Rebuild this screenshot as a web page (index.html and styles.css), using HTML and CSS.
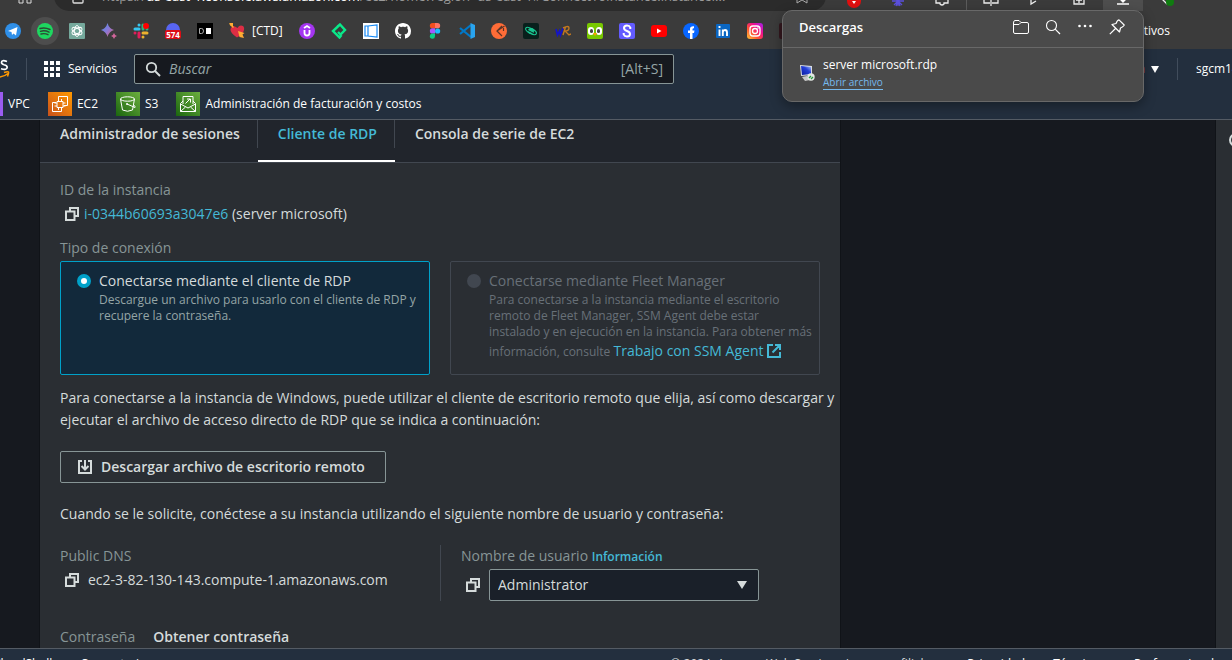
FILE: index.html
```html
<!DOCTYPE html>
<html lang="es">
<head>
<meta charset="utf-8">
<title>Conectarse a la instancia | EC2</title>
<link rel="stylesheet" href="styles.css">
</head>
<body>
<svg class="defs" aria-hidden="true">
  <defs>
    <linearGradient id="gStar" x1="0" y1="0" x2="1" y2="1"><stop offset="0" stop-color="#4a90e2"/><stop offset=".5" stop-color="#8a78d8"/><stop offset="1" stop-color="#e0606a"/></linearGradient>
    <linearGradient id="gEc2" x1="0" y1="1" x2="1" y2="0"><stop offset="0" stop-color="#c8511b"/><stop offset="1" stop-color="#ff9900"/></linearGradient>
    <linearGradient id="gGreen" x1="0" y1="1" x2="1" y2="0"><stop offset="0" stop-color="#1b660f"/><stop offset="1" stop-color="#6cae3e"/></linearGradient>
    <linearGradient id="gIg" x1="0" y1="1" x2="1" y2="0"><stop offset="0" stop-color="#ffc837"/><stop offset=".35" stop-color="#ff5430"/><stop offset=".65" stop-color="#f0108c"/><stop offset="1" stop-color="#a020f0"/></linearGradient>
    <linearGradient id="gScreen" x1="0" y1="1" x2="1" y2="0"><stop offset="0" stop-color="#0a1a9c"/><stop offset=".6" stop-color="#2540d8"/><stop offset="1" stop-color="#a8c4f8"/></linearGradient>
    <symbol id="copy" viewBox="0 0 14 14"><path d="M1 4.500h8.500V13H1zM5 4.500V1h8v8H9.500" fill="none" stroke="currentColor" stroke-width="2"/></symbol>
  </defs>
</svg>

<header class="browser">
  <div class="toolbar">
    <svg class="ico tool-apps" viewBox="0 0 16 16"><path d="M2 2h4v12H2zM10 2h4v12h-4z" fill="none" stroke="#ddd"/></svg>
    <div class="address">
      <svg class="ico" viewBox="0 0 16 16"><rect x="3" y="5" width="10" height="10" rx="1" fill="none" stroke="#ddd" stroke-width="1.3"/></svg>
      <span class="url">https://<b>us-east-1.console.aws.amazon.com</b>/ec2/home?region=us-east-1#ConnectToInstance:instanceI...</span>
      <svg class="ico star" viewBox="0 0 16 16"><path d="M3 4v11l5-3 5 3V4" fill="none" stroke="#aaa"/></svg>
    </div>
    <div class="tools">
      <svg class="ico" viewBox="0 0 16 16"><circle cx="8" cy="6" r="7" fill="#e01010"/><path d="M6 6l2 3 2-3z" fill="#fff"/></svg>
      <svg class="ico" viewBox="0 0 16 16"><path d="M8 0v11M2 6h12M4 2l8 8M12 2l-8 8M6 0l4 11M10 0L6 11" stroke="#5b50dd" stroke-width="1.3"/></svg>
      <svg class="ico" viewBox="0 0 16 16"><path d="M2 1v7h4v1q2 2 4 0V8h4V1" fill="none" stroke="#eee" stroke-width="1.3"/></svg>
      <span class="tool-line"></span>
      <svg class="ico" viewBox="0 0 16 16"><path d="M7 8H1V0M9 8h6V0M8 0v11" fill="none" stroke="#eee" stroke-width="1.3"/></svg>
      <svg class="ico" viewBox="0 0 16 16"><path d="M4 2v7l5-3" fill="none" stroke="#eee" stroke-width="1.3"/></svg>
      <svg class="ico" viewBox="0 0 16 16"><path d="M3 3v6h10V3M8 3v5M5 5h6" fill="none" stroke="#eee" stroke-width="1.3"/></svg>
      <span class="tool-active"><svg class="ico" viewBox="0 0 16 16"><path d="M2 9h12M8 0v7M5 4l3 3 3-3" fill="none" stroke="#fff" stroke-width="1.3"/></svg></span>
      <svg class="ico" viewBox="0 0 16 16"><path d="M2 3l6 6" stroke="#eee" stroke-width="1.3"/><circle cx="11" cy="7" r="4" fill="#107c10"/></svg>
    </div>
  </div>
  <nav class="bookmarks" aria-label="Favoritos">
    <a href="#" aria-label="Telegram"><svg class="ico" viewBox="0 0 16 16"><circle cx="8" cy="8" r="8" fill="#2f8fe8"/><path d="M3 8l9.500-4L11 12.500 8.500 10.500 7 12l-.500-3z" fill="#fff"/></svg></a>
    <a href="#" class="halo" aria-label="Spotify"><svg class="ico" viewBox="0 0 16 16"><circle cx="8" cy="8" r="8" fill="#1ed760"/><path d="M3 5.500q5-1.500 10 1M3.500 8.300q4.500-1.300 8.500.900M4 11q4-1 7 .700" fill="none" stroke="#2c4a34" stroke-width="1.400" stroke-linecap="round"/></svg></a>
    <a href="#" aria-label="ChatGPT"><svg class="ico" viewBox="0 0 16 16"><rect width="16" height="16" rx="1" fill="#75a99c"/><g fill="none" stroke="#fff" stroke-width=".9"><ellipse cx="8" cy="8" rx="2.600" ry="5.500"/><ellipse cx="8" cy="8" rx="2.600" ry="5.500" transform="rotate(60 8 8)"/><ellipse cx="8" cy="8" rx="2.600" ry="5.500" transform="rotate(120 8 8)"/></g></svg></a>
    <a href="#" aria-label="Gemini"><svg class="ico" viewBox="0 0 16 16"><path d="M6.500 0Q8 5.500 13 7 8 8.500 6.500 14 5 8.500 0 7 5 5.500 6.500 0z" fill="url(#gStar)"/><path d="M13 10q.700 2.300 3 3-2.300.700-3 3-.700-2.300-3-3 2.300-.700 3-3z" fill="#d0659a"/></svg></a>
    <a href="#" aria-label="Slack"><svg class="ico" viewBox="0 0 16 16"><g stroke-width="3" stroke-linecap="round"><path d="M6 2v0M2 6h4" stroke="#36c5f0"/><path d="M10 2v4M14 6v0" stroke="#2eb67d"/><path d="M2 10v0M6 10v4" stroke="#e01e5a"/><path d="M10 10h4M10 14v0" stroke="#ecb22e"/></g><circle cx="13" cy="3" r="3" fill="#f00"/></svg></a>
    <a href="#" aria-label="Discord, 574 avisos"><svg class="ico" viewBox="0 0 16 16"><circle cx="8" cy="7" r="7" fill="#5865f2"/><rect y="7" width="16" height="9" rx="2" fill="#dc0d14"/><text x="8" y="14.500" text-anchor="middle" class="count">574</text></svg></a>
    <a href="#" aria-label="D"><svg class="ico" viewBox="0 0 16 16"><path d="M0 0h16v16H0z"/><path d="M2.500 5.500h2q2 0 2 2.500t-2 2.500h-2z" fill="none" stroke="#aaa"/><path d="M9 5h5v6H9z" fill="#fff"/></svg></a>
    <a href="#" class="named"><svg class="ico" viewBox="0 0 16 16"><path d="M8 14.500Q1 10 1.500 6 2.500 2.500 6 3.500L8.500 5q2-3.500 5.500-2 2 2 .500 5.500-2 4-6.500 6z" fill="#dd2e44"/><path d="M1 1l3.500 3.500" stroke="#ffac33" stroke-width="1.500"/><path d="M0 0h4v3H2zM9 8l6.500 2-2 1.500 1.500 3.500-4.500-1z" fill="#ffac33"/></svg>[CTD]</a>
    <a href="#" aria-label="Udemy"><svg class="ico" viewBox="0 0 16 16"><circle cx="8" cy="8" r="8" fill="#a435f0"/><path d="M5.500 7v3q0 2.500 2.500 2.500t2.500-2.500V7M5 5l3-2 3 2" fill="none" stroke="#fff" stroke-width="1.800"/></svg></a>
    <a href="#" aria-label="Platzi"><svg class="ico" viewBox="0 0 16 16"><path d="M9 1.500L2 8l6.500 6.500L10.500 12M6.500 3.500L9 1.500 14 7l-4.500 4.500L7 9" fill="none" stroke="#0ae98a" stroke-width="2.400"/></svg></a>
    <a href="#" aria-label="Panel"><svg class="ico" viewBox="0 0 16 16"><path d="M0 0h16v16H0z" fill="#fff"/><path d="M5 3l9-1v12l-9-1zM5 3H2v10h3" fill="none" stroke="#1689f5" stroke-width="1.200"/></svg></a>
    <a href="#" aria-label="GitHub"><svg class="ico" viewBox="0 0 16 16"><path fill="#fff" d="M8 0C3.580 0 0 3.580 0 8c0 3.540 2.290 6.530 5.470 7.590.4.070.55-.17.55-.38 0-.19-.01-.82-.01-1.490-2.010.37-2.530-.49-2.690-.94-.09-.23-.48-.94-.82-1.130-.28-.15-.68-.52-.01-.53.63-.01 1.080.58 1.230.82.72 1.210 1.870.87 2.330.66.07-.52.28-.87.51-1.070-1.780-.2-3.640-.89-3.640-3.950 0-.87.31-1.590.82-2.150-.08-.2-.36-1.020.08-2.120 0 0 .67-.21 2.200.82.64-.18 1.320-.27 2-.27s1.360.09 2 .27c1.530-1.040 2.200-.82 2.200-.82.44 1.100.16 1.920.08 2.120.51.56.82 1.270.82 2.150 0 3.070-1.870 3.750-3.650 3.950.29.25.54.73.54 1.480 0 1.070-.01 1.930-.01 2.200 0 .21.15.46.55.38A8.010 8.010 0 0016 8c0-4.420-3.580-8-8-8z"/></svg></a>
    <a href="#" aria-label="Figma"><svg class="ico" viewBox="0 0 16 16"><path d="M8 0H5.500a2.600 2.600 0 000 5.300H8z" fill="#f24e1e"/><path d="M8 0h2.500a2.600 2.600 0 010 5.300H8z" fill="#ff7262"/><path d="M8 5.300H5.500a2.600 2.600 0 000 5.300H8z" fill="#a259ff"/><circle cx="10.600" cy="8" r="2.600" fill="#1abcfe"/><path d="M8 10.600H5.500A2.600 2.600 0 108 13.300z" fill="#0acf83"/></svg></a>
    <a href="#" aria-label="Visual Studio Code"><svg class="ico" viewBox="0 0 16 16"><path d="M1 5l11 9M1 11L12 2" stroke="#0078c8" stroke-width="2.200"/><path d="M11.500 0L16 2v12l-4.500 2z" fill="#29a4ef"/></svg></a>
    <a href="#" aria-label="Postman"><svg class="ico" viewBox="0 0 16 16"><circle cx="8" cy="8" r="8" fill="#ff6c37"/><path d="M13.500 3L6 8l5 5M6 8l5-5M12.500 5v3" fill="none" stroke="#5a3426" stroke-width="1.200"/></svg></a>
    <a href="#" aria-label="Planeta"><svg class="ico" viewBox="0 0 16 16"><rect width="16" height="16" rx="2" fill="#08201c"/><circle cx="8" cy="8" r="3" fill="#18c490"/><ellipse cx="8" cy="8" rx="6" ry="2.400" transform="rotate(28 8 8)" fill="none" stroke="#18c490" stroke-width="1.200"/><path d="M5 7.500l5 2.500" stroke="#08201c"/></svg></a>
    <a href="#" aria-label="WR"><svg class="ico" viewBox="0 0 16 16"><path d="M1 6l1.500 6 2-4 1 4L8 5" fill="none" stroke="#1414c8" stroke-width="1.700"/><path d="M8 12l2.500-8M8 5q6-3 6 0 0 3-4 3l4 4 2-1" fill="none" stroke="#c27820" stroke-width="1.400"/></svg></a>
    <a href="#" aria-label="Duolingo"><svg class="ico" viewBox="0 0 16 16"><rect width="16" height="16" rx="2" fill="#78c800"/><rect x="1" y="4" width="6" height="8" rx="3" fill="#fff"/><rect x="9" y="4" width="6" height="8" rx="3" fill="#fff"/><rect x="3" y="6" width="3" height="4" rx="1.500" fill="#444"/><rect x="10" y="6" width="3" height="4" rx="1.500" fill="#444"/><path d="M6 10h4l-2 3z" fill="#ff9c00"/></svg></a>
    <a href="#" aria-label="Stripe"><svg class="ico" viewBox="0 0 16 16"><rect width="16" height="16" rx="2" fill="#635bff"/><path d="M11.300 6V4.500Q10.500 2.500 8 2.500 5 2.500 5 5q0 2 3 3t3 3q0 2.500-3 2.500-2.500 0-3.300-2V10" fill="none" stroke="#fff" stroke-width="2"/></svg></a>
    <a href="#" aria-label="YouTube"><svg class="ico" viewBox="0 0 16 16"><rect y="2" width="16" height="12" rx="3" fill="#f00"/><path d="M6 5.500l4.500 2.500L6 10.500z" fill="#fff"/></svg></a>
    <a href="#" aria-label="Facebook"><svg class="ico" viewBox="0 0 16 16"><circle cx="8" cy="8" r="8" fill="#0866ff"/><path d="M7 16v-6H5V7.500h2V6q0-3 4-2.700v2Q9.500 5 9.500 6.500v1H11.500L11 10H9.500v6z" fill="#fff"/></svg></a>
    <a href="#" aria-label="LinkedIn"><svg class="ico" viewBox="0 0 16 16"><rect x="1" y="1" width="14" height="14" rx="1" fill="#0a66c2"/><path d="M4.500 6.500V13M4.500 3v2M7.800 6.500V13M7.800 9q.500-2 2.200-2 2 0 2 2.500V13" fill="none" stroke="#fff" stroke-width="1.900"/></svg></a>
    <a href="#" aria-label="Instagram"><svg class="ico" viewBox="0 0 16 16"><rect width="16" height="16" rx="3" fill="url(#gIg)"/><rect x="3" y="3" width="10" height="10" rx="3" fill="none" stroke="#fff" stroke-width="1.300"/><circle cx="8" cy="8" r="2.500" fill="none" stroke="#fff" stroke-width="1.300"/><circle cx="11" cy="5" r=".8" fill="#fff"/></svg></a>
    <a href="#" aria-label="App"><svg class="ico" viewBox="0 0 16 16"><rect width="16" height="16" rx="2" fill="#33171e"/></svg></a>
    <a href="#" class="others">Otros dispositivos</a>
  </nav>
</header>

<header class="aws">
  <div class="aws-row">
    <svg class="logo" viewBox="0 0 12 24" aria-label="aws"><path d="M7 4.500Q1.500 2.500 1.500 5.500 1.500 7 4 7.700 7.200 8.500 7.200 10.300 7 13.500 1 11.800" fill="none" stroke="#fff" stroke-width="1.700"/><path d="M-2 20Q4 20 8 16.500M4 15.500q4-1.200 4.500-.500.500 1-1 4.500" fill="none" stroke="#f90" stroke-width="1.500"/></svg>
    <span class="rule"></span>
    <button class="services"><svg class="grid-ico" viewBox="0 0 16 16"><path d="M0 0h4v4H0zM6 0h4v4H6zM12 0h4v4h-4zM0 6h4v4H0zM6 6h4v4H6zM12 6h4v4h-4zM0 12h4v4H0zM6 12h4v4H6zM12 12h4v4h-4z" fill="#fff"/></svg>Servicios</button>
    <label class="search">
      <svg class="ico" viewBox="0 0 16 16"><circle cx="6.500" cy="6.500" r="4.700" fill="none" stroke="#d5dbdb" stroke-width="1.800"/><path d="M10 10l5 5" stroke="#d5dbdb" stroke-width="2"/></svg>
      <input type="search" placeholder="Buscar" aria-label="Buscar">
      <span>[Alt+S]</span>
    </label>
    <div class="account">
      <button class="region">Norte de Virginia<svg viewBox="0 0 8 7"><path d="M0 0h8L4 7z" fill="#fff"/></svg></button>
      <span class="rule"></span>
      <button class="user">sgcm14</button>
    </div>
  </div>
  <nav class="favorites" aria-label="Servicios favoritos">
    <a href="#" class="vpc"><span class="vpc-ico"></span>VPC</a>
    <a href="#"><svg class="svc" viewBox="0 0 24 24"><path d="M0 0h24v24H0z" fill="url(#gEc2)"/><path d="M10.500 8V4.500h9v9H16M8 10.500H4.500v9h9V16M9 9.500h6v6H9zM10.500 7v2.500m3-2.500v2.500M10.500 15.500V18m3-2.500V18M6.500 11H9m-2.500 3H9m6-3h2.500M15 14h2.500" fill="none" stroke="#fff"/></svg>EC2</a>
    <a href="#"><svg class="svc" viewBox="0 0 24 24"><path d="M0 0h24v24H0z" fill="url(#gGreen)"/><ellipse cx="11.500" cy="7" rx="7" ry="2.200" fill="none" stroke="#fff"/><path d="M4.500 7l2 11q5 2.500 10 0l2-11M11 12l8 3.500q1-1-1.500-2.500" fill="none" stroke="#fff"/><circle cx="11" cy="12" r="1" fill="#fff"/></svg>S3</a>
    <a href="#"><svg class="svc" viewBox="0 0 24 24"><path d="M0 0h24v24H0z" fill="url(#gGreen)"/><path d="M7 12V4.500h10V12M7 9l-2.500 2.500v8h15v-8L17 9M4.500 12l7.500 4 7.500-4M4.500 19.500l5-4.500M19.500 19.500l-5-4.500M9.500 11.500l4.500-4.500M11 7h3.500v3.500" fill="none" stroke="#fff"/></svg>Administración de facturación y costos</a>
  </nav>
</header>

<div class="workspace">
  <main class="panel">
    <div class="tabs" role="tablist">
      <button role="tab">Administrador de sesiones</button>
      <button role="tab" aria-selected="true" class="active">Cliente de RDP</button>
      <button role="tab">Consola de serie de EC2</button>
    </div>
    <div class="content">
      <div class="label">ID de la instancia</div>
      <div class="value id-value"><button class="copy" aria-label="Copiar ID"><svg><use href="#copy"/></svg></button><a href="#">i-0344b60693a3047e6</a>&nbsp;(server microsoft)</div>
      <div class="label type-label">Tipo de conexión</div>
      <div class="tiles">
        <label class="tile selected">
          <input type="radio" name="conn" checked>
          <span><span class="tile-title">Conectarse mediante el cliente de RDP</span><span class="tile-text">Descargue un archivo para usarlo con el cliente de RDP y<br>recupere la contraseña.</span></span>
        </label>
        <label class="tile disabled">
          <input type="radio" name="conn" disabled>
          <span><span class="tile-title">Conectarse mediante Fleet Manager</span><span class="tile-text">Para conectarse a la instancia mediante el escritorio<br>remoto de Fleet Manager, SSM Agent debe estar<br>instalado y en ejecución en la instancia. Para obtener más<br>información, consulte <a href="#">Trabajo con SSM Agent <svg class="ext" viewBox="0 0 14 14"><path d="M6 1H1v12h12V8M8 1h5v5M13 1L5.500 8.500" fill="none" stroke="currentColor" stroke-width="2"/></svg></a></span></span>
        </label>
      </div>
      <p class="intro">Para conectarse a la instancia de Windows, puede utilizar el cliente de escritorio remoto que elija, así como descargar y<br>ejecutar el archivo de acceso directo de RDP que se indica a continuación:</p>
      <button class="download"><svg viewBox="0 0 14 14"><path d="M4 1H1v12h12V1h-3M7 0v9M3.500 6L7 9.500 10.500 6" fill="none" stroke="currentColor" stroke-width="2"/></svg>Descargar archivo de escritorio remoto</button>
      <p class="prompt">Cuando se le solicite, conéctese a su instancia utilizando el siguiente nombre de usuario y contraseña:</p>
      <div class="credentials">
        <div>
          <div class="label">Public DNS</div>
          <div class="value dns"><button class="copy" aria-label="Copiar DNS"><svg><use href="#copy"/></svg></button>ec2-3-82-130-143.compute-1.amazonaws.com</div>
        </div>
        <div class="user-col">
          <div class="label"><label for="username">Nombre de usuario</label> <a href="#" class="info">Información</a></div>
          <div class="user-field">
            <button class="copy" aria-label="Copiar usuario"><svg><use href="#copy"/></svg></button>
            <div class="select"><select id="username"><option>Administrator</option></select><svg viewBox="0 0 10 8"><path d="M0 0h10L5 8z" fill="#d5dbdb"/></svg></div>
          </div>
        </div>
      </div>
      <div class="password"><span class="label">Contraseña</span><a href="#">Obtener contraseña</a></div>
    </div>
  </main>
  <aside class="rail" aria-label="Ayuda"><svg class="ico" viewBox="0 0 16 16"><circle cx="8" cy="8" r="6" fill="none" stroke="#d5dbdb" stroke-width="2"/></svg></aside>
</div>

<footer class="foot">
  <a href="#">CloudShell</a><a href="#">Comentarios</a>
  <span>© 2024, Amazon Web Services, Inc. o sus filiales.</span>
  <a href="#">Privacidad</a><a href="#">Términos</a><a href="#">Preferencias de cookies</a>
</footer>

<section class="downloads" aria-label="Descargas">
  <div class="dl-head">
    <h2>Descargas</h2>
    <button aria-label="Abrir carpeta"><svg class="ico" viewBox="0 0 16 16"><path d="M.500 4v9q0 1.500 1.500 1.500h12q1.500 0 1.500-1.500V5Q15.500 3.500 14 3.500H8L6 1.500H2Q.500 1.500.500 4zM.500 5.500H6l2-2" fill="none" stroke="#fff"/></svg></button>
    <button aria-label="Buscar descargas"><svg class="ico" viewBox="0 0 16 16"><circle cx="6.500" cy="6.500" r="5" fill="none" stroke="#fff" stroke-width="1.100"/><path d="M10.200 10.200l4.800 4.800" stroke="#fff" stroke-width="1.200"/></svg></button>
    <button aria-label="Más opciones"><svg class="ico" viewBox="0 0 16 16"><g fill="#fff"><circle cx="2.500" cy="7" r="1.300"/><circle cx="8" cy="7" r="1.300"/><circle cx="13.500" cy="7" r="1.300"/></g></svg></button>
    <button aria-label="Anclar"><svg class="ico" viewBox="0 0 16 16"><path d="M10 .800l5.200 5.200q0 1-3.700 3l-1 4L3 5.500l4-1Q8.500.800 10 .800zM6.500 9.500L.800 15.200" fill="none" stroke="#fff" stroke-width="1.200" stroke-linejoin="round"/></svg></button>
  </div>
  <div class="dl-item">
    <svg class="ico" viewBox="0 0 16 16"><path d="M1 0l12 1v9L2 11z" fill="#d8dce4"/><path d="M2 1l10 1v7l-9 1z" fill="url(#gScreen)"/><path d="M3 12l5-1 3 4-5 1z" fill="#c8c8c8"/><circle cx="12" cy="12" r="3.700" fill="#e4e8e4"/><path d="M10 13l2-2m0 3l2-2" stroke="#279a3c" stroke-width="1.300"/></svg>
    <div><div class="dl-name">server microsoft.rdp</div><a href="#">Abrir archivo</a></div>
  </div>
</section>
</body>
</html>
```
FILE: styles.css
```css
* { box-sizing: border-box; }
body {
  margin: 0;
  height: 100vh;
  display: flex;
  flex-direction: column;
  overflow: hidden;
  position: relative;
  background: #16191f;
  color: #d5dbdb;
  font: 14px/22px "Open Sans", "Noto Sans", sans-serif;
}
button { font: inherit; color: inherit; background: none; border: 0; padding: 0; }
a { color: #44b9d6; text-decoration: none; }
svg { display: block; flex: none; }
.defs { position: absolute; width: 0; height: 0; }
.ico { width: 16px; height: 16px; }

/* Browser chrome */
.browser { flex: none; background: #3b3b3b; color: #fff; }
.toolbar { height: 11px; overflow: hidden; display: flex; align-items: flex-end; padding-left: 17px; }
.tool-apps { margin-bottom: 6px; }
.address {
  flex: 1;
  height: 30px;
  margin-left: 21px;
  display: flex;
  align-items: center;
  gap: 16px;
  padding: 0 16px;
  background: #2b2b2b;
  border-radius: 15px;
  overflow: hidden;
}
.url { flex: 1; font-size: 13px; color: #9a9a9a; white-space: nowrap; overflow: hidden; }
.url b { font-weight: 400; color: #fff; }
.tools { width: 406px; flex: none; display: flex; align-items: flex-end; gap: 28px; padding-left: 20px; }
.tool-line { width: 1px; height: 11px; margin: 0 -12px; background: #5c5c5c; }
.tool-active { padding: 0 12px; margin: 0 -12px; background: #4e4e4e; }
.bookmarks { display: flex; align-items: center; gap: 16px; height: 38px; padding: 2px 62px 0 5px; font-size: 12px; }
.bookmarks a { color: #fff; }
.halo { border-radius: 50%; background: #4d4d4d; box-shadow: 0 0 0 6px #4d4d4d; }
.named { display: flex; align-items: center; gap: 7px; }
.others { margin-left: auto; }
.count { font: 700 8px "Open Sans", sans-serif; fill: #fff; }

/* AWS navigation */
.aws { flex: none; background: #232f3e; border-bottom: 1px solid #545b64; color: #fff; font-size: 12px; font-weight: 500; }
.aws-row { height: 40px; display: flex; align-items: center; }
.logo { width: 12px; height: 24px; }
.rule { width: 1px; height: 22px; background: #414d5c; }
.logo + .rule { margin-left: 14px; }
.services { display: flex; align-items: center; gap: 8px; width: 90px; margin: 0 0 0 17px; white-space: nowrap; }
.grid-ico { width: 16px; height: 16px; }
.search {
  width: 540px;
  height: 30px;
  display: flex;
  align-items: center;
  padding: 0 10px;
  gap: 8px;
  background: #16191f;
  border: 1px solid #879596;
  border-radius: 2px;
  color: #95a5a6;
  font-size: 14px;
  font-weight: 400;
}
.search input { flex: 1; min-width: 0; padding: 0; background: none; border: 0; outline: 0; font: inherit; color: inherit; }
.search input::placeholder { color: #95a5a6; font-style: italic; opacity: 1; }
.account { margin-left: auto; margin-right: -9px; display: flex; align-items: center; gap: 18px; }
.user { width: 45px; text-align: left; }
.region { display: flex; align-items: center; gap: 6px; color: #f90; }
.region svg { width: 8px; height: 7px; }
.favorites { height: 30px; display: flex; align-items: center; gap: 18px; }
.favorites a { display: flex; align-items: center; gap: 5px; color: #fff; }
.svc { width: 24px; height: 24px; }
.vpc-ico { width: 3px; height: 24px; background: #9a5cf0; }

/* Workspace */
.workspace { flex: 1; min-height: 0; overflow: hidden; display: flex; padding-left: 40px; }
.panel { flex: 0 1 800px; min-width: 0; background: #2a2e33; box-shadow: 0 0 0 1px #101318; }
.tabs { height: 43px; display: flex; background: #21252c; border-bottom: 1px solid #414750; font-weight: 600; }
.tabs button { height: 42px; padding: 0 18px 12px 20px; border-bottom: 2px solid transparent; white-space: nowrap; background: linear-gradient(#414750, #414750) right 0 top 0 / 1px 28px no-repeat; }
.tabs button:last-child { background: none; }
.tabs .active { color: #44b9d6; border-bottom-color: #fff; }
.content { padding: 16px 20px 0; }
.label { color: #879596; }
.value { display: flex; align-items: center; height: 26px; }
.copy { width: 14px; height: 14px; flex: none; margin: 0 5px; }
.copy svg { width: 14px; height: 14px; }
.type-label { margin-top: 10px; }
.tiles { display: grid; grid-template-columns: minmax(0, 1fr) minmax(0, 1fr); gap: 20px; margin-top: 2px; }
.tile { height: 114px; display: flex; gap: 8px; padding: 9px 0 9px 16px; border: 1px solid #414750; border-radius: 2px; line-height: 20px; white-space: nowrap; }
.selected { background: #12293b; border-color: #00a1c9; }
.tile input { appearance: none; flex: none; width: 14px; height: 14px; margin: 3px 0 0; border-radius: 50%; background: #414750; }
.selected input { background: #fff; border: 4px solid #00a1c9; }
.tile-title { display: block; }
.tile-text { display: block; margin-top: 1px; font-size: 12px; line-height: 16px; color: #95a5a6; }
.tile-text a { font-size: 14px; line-height: 22px; }
.disabled, .disabled .tile-text { color: #687078; }
.ext { display: inline-block; width: 14px; height: 14px; vertical-align: -2px; }
p { margin: 12px 0 20px; }
.intro { white-space: nowrap; }
.download { height: 32px; display: flex; align-items: center; gap: 9px; padding: 0 20px 0 17px; border: 1px solid #879596; border-radius: 2px; font-weight: 600; }
.download svg { width: 14px; height: 14px; }
.prompt { margin: 20px 0; }
.credentials { display: grid; grid-template-columns: 1fr 1fr; }
.dns { gap: 4px; }
.user-col { padding-left: 20px; border-left: 1px solid #414750; }
.info { font-size: 12px; line-height: 16px; font-weight: 600; }
.user-field { display: flex; align-items: center; margin-top: 2px; }
.user-field .copy { margin-right: 9px; }
.select { display: flex; align-items: center; position: relative; width: 270px; height: 32px; background: #1a2029; border: 1px solid #879596; border-radius: 2px; }
.select select { appearance: none; width: 100%; height: 100%; border: 0; padding: 0 8px; background: none; color: inherit; font: inherit; }
.select svg { position: absolute; right: 11px; width: 10px; height: 8px; pointer-events: none; }
.password { display: flex; gap: 18px; margin-top: 25px; }
.password a { color: #d5dbdb; font-weight: 600; }
.rail { width: 16px; margin-left: auto; padding: 12px 0 0 12px; overflow: hidden; background: #2a2e33; box-shadow: 0 0 0 1px #101318; }

/* Footer */
.foot { flex: none; height: 12px; overflow: hidden; display: flex; gap: 28px; padding-top: 7px; background: #232f3e; border-top: 1px solid #545b64; font-size: 12px; line-height: 16px; white-space: nowrap; margin-right: -34px; }
.foot a { color: #fff; }
.foot a:first-child { margin-left: -7px; }
.foot span { margin-left: auto; }

/* Downloads flyout */
.downloads { position: absolute; top: 10px; right: 88px; width: 362px; height: 92px; background: #4a4a4a; border: 1px solid #686868; border-radius: 10px; box-shadow: 0 4px 12px rgba(0, 0, 0, .35); color: #fff; }
.dl-head { height: 37px; display: flex; align-items: center; gap: 16px; padding: 0 18px 4px 16px; border-bottom: 1px solid #686868; }
.dl-head h2 { margin: 0 auto 0 0; font-size: 13px; font-weight: 600; }
.dl-item { display: flex; align-items: center; gap: 8px; height: 53px; padding: 0 16px 3px; }
.dl-name { font-size: 12px; line-height: 16px; }
.dl-item a { display: inline-block; font-size: 10px; line-height: 14px; color: #76b9ed; border-bottom: 1px solid #76b9ed; }
.dl-item div { line-height: 16px; }
```
